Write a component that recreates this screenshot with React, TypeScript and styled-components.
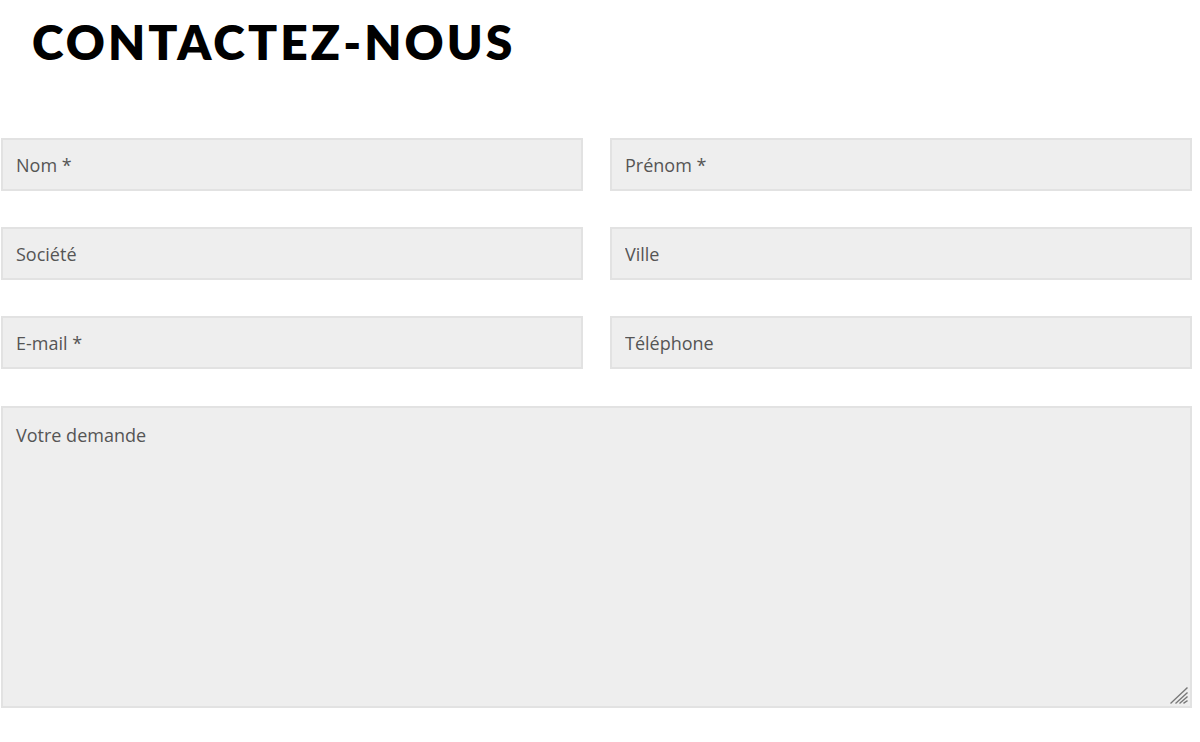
import React from "react";
import styled, { createGlobalStyle } from "styled-components";

const Global = createGlobalStyle`
  html, body { margin: 0; padding: 0; background: #ffffff; }
  * { box-sizing: border-box; }
`;

const Page = styled.div`
  width: 1200px;
  padding: 0 8px 0 1px;
`;

const Title = styled.h1`
  margin: 0;
  padding: 16px 0 0 31px;
  height: 138px;
  font-family: "Lato", "DejaVu Sans", sans-serif;
  font-weight: 800;
  font-size: 48px;
  line-height: 52px;
  letter-spacing: 3.1px;
  color: #000;
`;

const Form = styled.form`
  display: grid;
  grid-template-columns: 582px 582px;
  column-gap: 27px;
  row-gap: 36px;
`;

const Field = styled.input`
  height: 53px;
  width: 100%;
  margin: 0;
  padding: 0 13px;
  background: #eeeeee;
  border: 2px solid #e2e2e2;
  border-radius: 0;
  font-family: "Open Sans", "Liberation Sans", sans-serif;
  font-size: 18px;
  color: #555;
  outline: none;
  &::placeholder { color: #555; opacity: 1; }
`;

const AreaWrap = styled.div`
  grid-column: 1 / span 2;
  position: relative;
  height: 302px;
  margin-top: 1px;
`;

const Area = styled.textarea`
  display: block;
  height: 100%;
  width: 100%;
  margin: 0;
  padding: 14px 13px;
  background: #eeeeee;
  border: 2px solid #e2e2e2;
  border-radius: 0;
  font-family: "Open Sans", "Liberation Sans", sans-serif;
  font-size: 18px;
  line-height: 26px;
  color: #555;
  outline: none;
  resize: none;
  &::placeholder { color: #555; opacity: 1; }
`;

const Grip = styled.svg`
  position: absolute;
  right: 4px;
  bottom: 4px;
  width: 20px;
  height: 20px;
  pointer-events: none;
`;

export default function App() {
  return (
    <Page>
      <Global />
      <Title>CONTACTEZ-NOUS</Title>
      <Form>
        <Field placeholder="Nom *" />
        <Field placeholder="Prénom *" />
        <Field placeholder="Société" />
        <Field placeholder="Ville" />
        <Field placeholder="E-mail *" />
        <Field placeholder="Téléphone" />
        <AreaWrap>
          <Area placeholder="Votre demande" />
          <Grip viewBox="0 0 20 20">
            <g stroke="#777" strokeWidth="1.3" strokeLinecap="square">
              <line x1="19" y1="4" x2="3" y2="19" />
              <line x1="19" y1="9" x2="8" y2="19" />
              <line x1="19" y1="13" x2="12" y2="19" />
              <line x1="19" y1="17" x2="16" y2="19" />
            </g>
          </Grip>
        </AreaWrap>
      </Form>
    </Page>
  );
}
